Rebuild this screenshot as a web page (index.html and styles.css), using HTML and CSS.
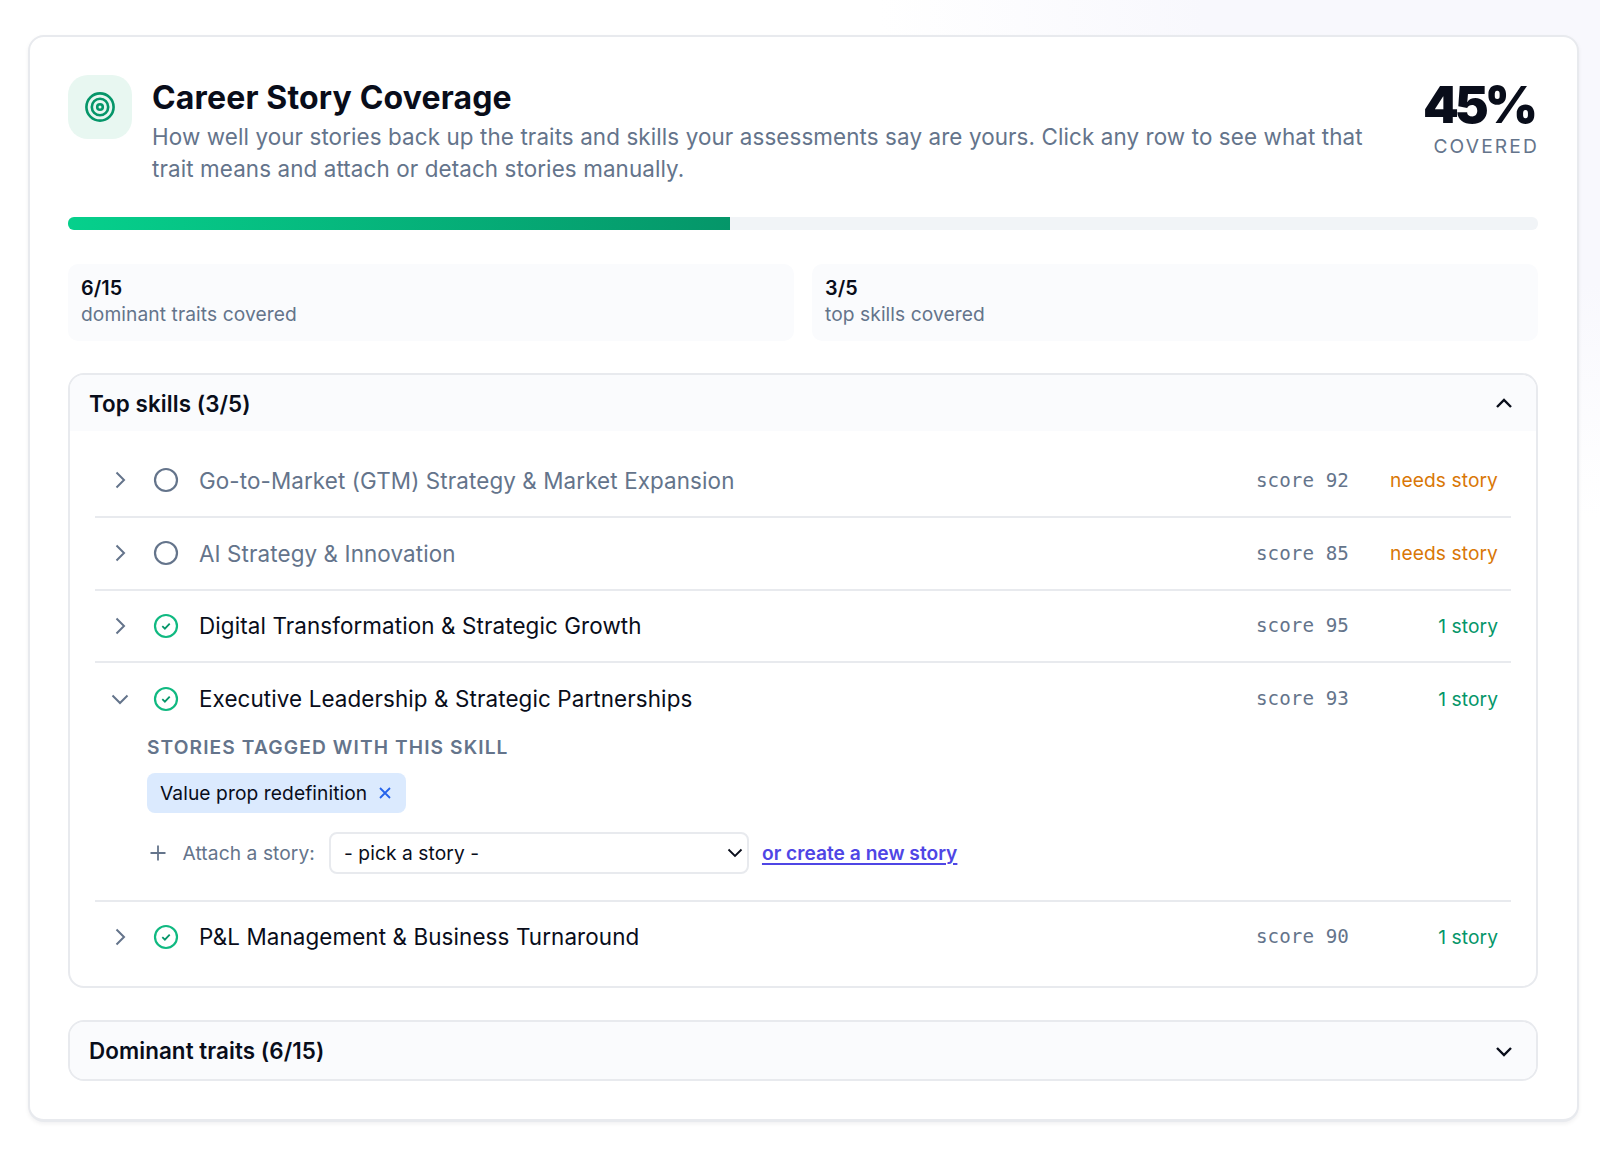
FILE: index.html
```html
<!DOCTYPE html>
<html lang="en">
<head>
    <meta charset="UTF-8">
    <meta name="viewport" content="width=device-width, initial-scale=1.0">
    <title>Career Story Coverage</title>
    <link rel="stylesheet" href="styles.css">
</head>
<body>

    <div class="card">
        <div class="card-head">
            <div class="head-icon">
                <svg width="32" height="32" viewBox="0 0 32 32" fill="none" stroke="#059669" stroke-width="2.6">
                    <circle cx="16" cy="16" r="13.6"/>
                    <circle cx="16" cy="16" r="8.2"/>
                    <circle cx="16" cy="16" r="2.8"/>
                </svg>
            </div>
            <div class="head-text">
                <h1>Career Story Coverage</h1>
                <p>How well your stories back up the traits and skills your assessments say are yours. Click any row to see what that trait means and attach or detach stories manually.</p>
            </div>
            <div class="head-score">
                <div class="percent">45%</div>
                <div class="percent-label">COVERED</div>
            </div>
        </div>

        <div class="progress"><div class="progress-fill" style="width: 45%"></div></div>

        <div class="stats">
            <div class="stat"><b>6/15</b><span>dominant traits covered</span></div>
            <div class="stat"><b>3/5</b><span>top skills covered</span></div>
        </div>

        <div class="section">
            <div class="section-head">
                <span>Top skills (3/5)</span>
                <svg class="section-chevron" viewBox="0 0 24 24"><path d="M5 16l7-7 7 7"/></svg>
            </div>
            <div class="rows">
                <div class="row">
                    <svg class="chevron" viewBox="0 0 24 24"><path d="M8.5 4.5l7.5 7.5-7.5 7.5"/></svg>
                    <svg class="status" viewBox="0 0 26 26"><circle class="ring-empty" cx="13" cy="13" r="11"/></svg>
                    <span class="name muted">Go-to-Market (GTM) Strategy &amp; Market Expansion</span>
                    <span class="score">score 92</span>
                    <span class="count needs">needs story</span>
                </div>
                <div class="row">
                    <svg class="chevron" viewBox="0 0 24 24"><path d="M8.5 4.5l7.5 7.5-7.5 7.5"/></svg>
                    <svg class="status" viewBox="0 0 26 26"><circle class="ring-empty" cx="13" cy="13" r="11"/></svg>
                    <span class="name muted">AI Strategy &amp; Innovation</span>
                    <span class="score">score 85</span>
                    <span class="count needs">needs story</span>
                </div>
                <div class="row">
                    <svg class="chevron" viewBox="0 0 24 24"><path d="M8.5 4.5l7.5 7.5-7.5 7.5"/></svg>
                    <svg class="status" viewBox="0 0 26 26"><circle class="ring-done" cx="13" cy="13" r="11"/><path class="tick" d="M9.3 13.2l2.6 2.5 4.8-5"/></svg>
                    <span class="name">Digital Transformation &amp; Strategic Growth</span>
                    <span class="score">score 95</span>
                    <span class="count done">1 story</span>
                </div>
                <div class="row-group">
                    <div class="row open">
                        <svg class="chevron" viewBox="0 0 24 24"><path d="M4.5 8.5l7.5 7.5 7.5-7.5"/></svg>
                        <svg class="status" viewBox="0 0 26 26"><circle class="ring-done" cx="13" cy="13" r="11"/><path class="tick" d="M9.3 13.2l2.6 2.5 4.8-5"/></svg>
                        <span class="name">Executive Leadership &amp; Strategic Partnerships</span>
                        <span class="score">score 93</span>
                        <span class="count done">1 story</span>
                    </div>
                    <div class="detail">
                        <div class="detail-title">STORIES TAGGED WITH THIS SKILL</div>
                        <div class="tag">
                            <span>Value prop redefinition</span>
                            <svg viewBox="0 0 16 16"><path d="M3 3l10 10M13 3L3 13"/></svg>
                        </div>
                        <div class="attach">
                            <svg class="plus" viewBox="0 0 16 16"><path d="M8 .5v15M.5 8h15"/></svg>
                            <label for="pick">Attach a story:</label>
                            <div class="select-wrap">
                                <select id="pick"><option>- pick a story -</option></select>
                                <svg viewBox="0 0 16 16"><path d="M1.5 4.5L8 11l6.5-6.5"/></svg>
                            </div>
                            <a href="#">or create a new story</a>
                        </div>
                    </div>
                </div>
                <div class="row last">
                    <svg class="chevron" viewBox="0 0 24 24"><path d="M8.5 4.5l7.5 7.5-7.5 7.5"/></svg>
                    <svg class="status" viewBox="0 0 26 26"><circle class="ring-done" cx="13" cy="13" r="11"/><path class="tick" d="M9.3 13.2l2.6 2.5 4.8-5"/></svg>
                    <span class="name">P&amp;L Management &amp; Business Turnaround</span>
                    <span class="score">score 90</span>
                    <span class="count done">1 story</span>
                </div>
            </div>
        </div>

        <div class="section closed">
            <div class="section-head">
                <span>Dominant traits (6/15)</span>
                <svg class="section-chevron" viewBox="0 0 24 24"><path d="M5 9l7 7 7-7"/></svg>
            </div>
        </div>
    </div>

</body>
</html>
```

FILE: styles.css
```css
* {
    box-sizing: border-box;
}

body {
    margin: 0;
    height: 1149px;
    padding: 35px 21px 0 28px;
    font-family: Inter, "Liberation Sans", sans-serif;
    letter-spacing: 0.005em;
    color: #090d1a;
    background: radial-gradient(ellipse 45% 45% at 100% 0, #f8f8fd 55%, #fff 100%);
    overflow: hidden;
}

.card {
    height: 1087px;
    padding: 38px 39px 0 38px;
    background: #fff;
    border: 2px solid #e8eaee;
    border-bottom-width: 3px;
    border-radius: 16px;
    box-shadow: 0 2px 4px rgba(15, 23, 42, 0.06);
}

.card-head {
    display: flex;
    align-items: flex-start;
    height: 142px;
}

.head-icon {
    flex: none;
    display: flex;
    align-items: center;
    justify-content: center;
    width: 64px;
    height: 64px;
    margin-right: 20px;
    background: #e8f7f1;
    border-radius: 20px;
}

.head-text {
    flex: 1;
}

.head-text h1 {
    margin: 1px 0 0;
    font-size: 32px;
    line-height: 44px;
    font-weight: 700;
    letter-spacing: 0.16px;
}

.head-text p {
    margin: 1px 0 0;
    font-size: 22.4px;
    line-height: 32px;
    letter-spacing: 0.11px;
    color: #64748b;
}

.head-score {
    flex: none;
    width: 160px;
    text-align: right;
}

.percent {
    font-size: 51px;
    line-height: 60px;
    font-weight: 900;
    letter-spacing: -4px;
    margin-right: 4px;
}

.percent-label {
    margin-top: -2px;
    margin-right: -1px;
    font-size: 19.2px;
    line-height: 26px;
    letter-spacing: 2.15px;
    color: #64748b;
}

.progress {
    height: 13px;
    background: #f1f4f7;
    border-radius: 6px;
    overflow: hidden;
}

.progress-fill {
    height: 100%;
    background: linear-gradient(90deg, #06d08c, #059669);
}

.stats {
    display: flex;
    gap: 18px;
    margin-top: 34px;
}

.stat {
    flex: 1;
    height: 77px;
    padding: 11px 13px;
    background: #fafbfd;
    border-radius: 10px;
}

.stat b {
    display: block;
    font-size: 19.8px;
    line-height: 26px;
    font-weight: 600;
}

.stat span {
    display: block;
    font-size: 19.2px;
    line-height: 26px;
    color: #64748b;
}

.section {
    margin-top: 32px;
    background: #fff;
    border: 2px solid #e8eaee;
    border-radius: 16px;
    overflow: hidden;
}

.section-head {
    display: flex;
    align-items: center;
    justify-content: space-between;
    height: 56px;
    padding: 0 20px 0 19px;
    font-size: 22.4px;
    font-weight: 600;
    background: #fafbfd;
}

.closed .section-head {
    height: 57px;
}

.section-chevron {
    width: 24px;
    height: 24px;
    fill: none;
    stroke: #090d1a;
    stroke-width: 2.4;
}

.rows {
    padding: 14px 25px 15px 25px;
}

.row {
    display: flex;
    align-items: center;
    height: 72.8px;
    padding: 0 13px 0 13px;
    border-bottom: 2px solid #e8eaee;
}

.row.open {
    height: 71px;
    border-bottom: none;
}

.row.last {
    height: 69px;
    border-bottom: none;
}

.row-group {
    border-bottom: 2px solid #e8eaee;
}

.chevron {
    flex: none;
    width: 24px;
    height: 24px;
    margin-right: 21px;
    fill: none;
    stroke: #64748b;
    stroke-width: 2;
}

.status {
    flex: none;
    width: 26px;
    height: 26px;
    margin-right: 20px;
    fill: none;
}

.ring-empty {
    stroke: #64748b;
    stroke-width: 2.2;
}

.ring-done {
    stroke: #10b981;
    stroke-width: 2.2;
}

.tick {
    stroke: #059669;
    stroke-width: 1.8;
}

.name {
    flex: 1;
    font-size: 22.4px;
    letter-spacing: 0.115px;
}

.name.muted {
    color: #64748b;
}

.score {
    font-family: "DejaVu Sans Mono", monospace;
    font-size: 19.2px;
    color: #64748b;
}

.count {
    width: 149px;
    font-size: 19.2px;
    text-align: right;
}

.needs {
    color: #d97706;
}

.done {
    color: #059669;
}

.detail {
    padding: 0 0 26px 52px;
}

.detail-title {
    font-size: 19.2px;
    line-height: 26px;
    font-weight: 600;
    letter-spacing: 1.1px;
    color: #64748b;
}

.tag {
    display: inline-flex;
    align-items: center;
    gap: 10px;
    height: 40px;
    margin-top: 13px;
    padding: 0 13px;
    font-size: 19.2px;
    background: #dbeafe;
    border-radius: 8px;
}

.tag svg {
    width: 16px;
    height: 16px;
    fill: none;
    stroke: #2563eb;
    stroke-width: 1.8;
}

.attach {
    display: flex;
    align-items: center;
    margin-top: 19px;
    font-size: 19.2px;
    color: #64748b;
}

.plus {
    flex: none;
    width: 16px;
    height: 16px;
    margin: 0 16.5px 0 3px;
    fill: none;
    stroke: #64748b;
    stroke-width: 1.8;
}

.select-wrap {
    position: relative;
    width: 420px;
    height: 42px;
    margin: 0 13px 0 14px;
}

.select-wrap select {
    width: 100%;
    height: 100%;
    padding: 0 13px;
    appearance: none;
    font-family: inherit;
    font-size: 19.2px;
    letter-spacing: inherit;
    color: #090d1a;
    background: #fff;
    border: 2px solid #e8eaee;
    border-radius: 8px;
}

.select-wrap svg {
    position: absolute;
    top: 13px;
    right: 6px;
    width: 16px;
    height: 16px;
    fill: none;
    stroke: #090d1a;
    stroke-width: 1.8;
    pointer-events: none;
}

.attach a {
    font-weight: 600;
    letter-spacing: 0;
    color: #4f46e5;
    text-decoration-thickness: 2px;
    text-underline-offset: 3px;
}
```
